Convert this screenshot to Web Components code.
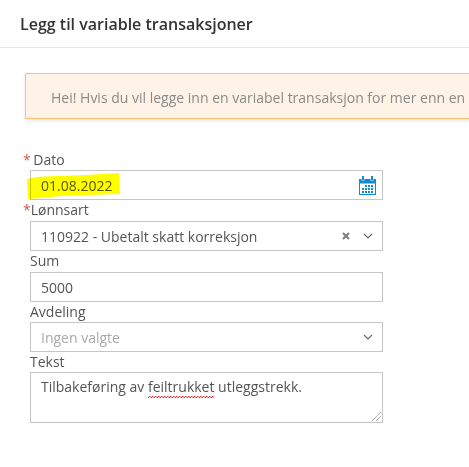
<!DOCTYPE html>
<html lang="no"><head><meta charset="utf-8"><style>
html,body{margin:0;padding:0;background:#fff;overflow:hidden}
body{width:469px;height:467px;font-family:"Open Sans",sans-serif;color:#555}
</style></head><body>
<template id="t-header"><style>
:host{display:block;height:47px;border-bottom:1px solid #e5e5e5;padding:0 20px}
div{font-size:16px;font-weight:600;line-height:48px;color:#333;white-space:nowrap}
</style><div><slot></slot></div></template>
<template id="t-alert"><style>
:host{display:block;box-sizing:border-box;height:46px;margin:25px 0 0 25px;padding:0 0 0 25px;background:#fef3e6;border:1px solid #fbc271;border-right:0;box-shadow:0 2px 4px rgba(0,0,0,.1);color:#8a8a88;font-size:14px;line-height:48px;white-space:nowrap}
</style><slot></slot></template>
<template id="t-field"><style>
:host{display:block;font-size:14px;line-height:21px;color:#555}
.l{display:block;height:var(--label-h,21px);line-height:var(--label-lh,19px);white-space:nowrap}
.box{box-sizing:border-box;border:1px solid #c6c6c6;height:30px;background:#fff;padding:1px 10px 0;line-height:28px;display:flex;align-items:center;justify-content:space-between;gap:6px}
</style><span class="l"><slot name="label"></slot></span><div class="box"><slot></slot></div></template>
<template id="t-form"><style>
:host{display:flex;flex-direction:column;width:353px;margin:30px 0 0 30px;position:relative}
</style><slot></slot></template>
<template id="t-hl"><style>
:host{position:absolute;left:-4px;top:22px;width:95px;height:29px;display:block;mix-blend-mode:multiply;pointer-events:none}
svg{display:block}
</style><svg width="95" height="29" viewBox="0 0 95 29"><polygon fill="#ffff00" points="1,8 10,6 30,5 60,4 93,2 94,23 60,24 35,25 15,27 2,28"/></svg></template>
<template id="t-text"><style>
:host{display:block;font-size:14px;line-height:19px;color:#555}
.l{display:block;height:20px}
.box{position:relative;box-sizing:border-box;height:51px;border:1px solid #c6c6c6;padding:0 10px;line-height:28px;white-space:nowrap}
.sp{padding-bottom:2px;background:linear-gradient(135deg,transparent 40%,#e22 40%,#e22 60%,transparent 60%) 0 100%/3px 2px repeat-x,linear-gradient(45deg,transparent 40%,#e22 40%,#e22 60%,transparent 60%) 1.5px 100%/3px 2px repeat-x}
svg{position:absolute;right:1px;bottom:1px}
</style><span class="l"><slot name="label"></slot></span><div class="box"><slot></slot><span class="sp"><slot name="sp"></slot></span><slot name="after"></slot><svg width="10" height="10" viewBox="0 0 10 10"><path d="M1 10L10 1M5 10l5-5" stroke="#777" stroke-width="1" stroke-dasharray="1 .6"/></svg></div></template>
<script>
const map={"app-header":"t-header","app-alert":"t-alert","app-field":"t-field","app-form":"t-form","app-highlight":"t-hl","app-textarea":"t-text"};
for(const n in map){customElements.define(n,class extends HTMLElement{constructor(){super();this.attachShadow({mode:"open"}).appendChild(document.getElementById(map[n]).content.cloneNode(true))}})}
</script>
<app-header>Legg til variable transaksjoner</app-header>
<app-alert>Hei! Hvis du vil legge inn en variabel transaksjon for mer enn en</app-alert>
<app-form>
  <app-field style="--label-lh:21px">
    <span slot="label"><span style="color:#d9534f;margin-left:-7px;margin-right:-1px">*</span> Dato</span>
    <span>01.08.2022</span>
    <svg width="17" height="19" viewBox="0 0 17 19" style="margin-right:-4px;margin-top:-1px" fill="#0f8ad8"><path d="M0 3h2.5v1.5h3V3h6v1.5h3V3H17v16H0zM1 7.5V18h15V7.5z"/><rect x="3" y="0" width="2" height="4"/><rect x="12" y="0" width="2" height="4"/><rect x="6" y="9" width="2" height="2"/><rect x="9" y="9" width="2" height="2"/><rect x="12" y="9" width="2" height="2"/><rect x="3" y="12" width="2" height="2"/><rect x="6" y="12" width="2" height="2"/><rect x="9" y="12" width="2" height="2"/><rect x="12" y="12" width="2" height="2"/><rect x="3" y="15" width="2" height="2"/><rect x="6" y="15" width="2" height="2"/><rect x="9" y="15" width="2" height="2"/><rect x="12" y="15" width="2" height="2"/></svg>
  </app-field>
  <app-field>
    <span slot="label"><span style="color:#d9534f;margin-left:-7px">*</span>Lønnsart</span>
    <span style="flex:1">110922 - Ubetalt skatt korreksjon</span>
    <svg width="8" height="8" viewBox="0 0 8 8" style="margin-right:7px;margin-top:-1px"><path d="M1 1l6 6M7 1L1 7" stroke="#808080" stroke-width="2.2"/></svg>
    <svg width="10" height="6" viewBox="0 0 10 6" style="margin-right:-1px;margin-top:-1px"><path d="M1 1l4 4 4-4" fill="none" stroke="#666" stroke-width="1.1"/></svg>
  </app-field>
  <app-field>
    <span slot="label">Sum</span>
    <span>5000</span>
  </app-field>
  <app-field style="--label-h:20px">
    <span slot="label">Avdeling</span>
    <span style="color:#a9a9a9;flex:1">Ingen valgte</span>
    <svg width="10" height="6" viewBox="0 0 10 6" style="margin-right:-1px;margin-top:-1px"><path d="M1 1l4 4 4-4" fill="none" stroke="#666" stroke-width="1.1"/></svg>
  </app-field>
  <app-textarea>
    <span slot="label">Tekst</span>
    Tilbakeføring av <span slot="sp">feiltrukket</span><span slot="after"> utleggstrekk.</span>
  </app-textarea>
  <app-highlight></app-highlight>
</app-form>
</body></html>
